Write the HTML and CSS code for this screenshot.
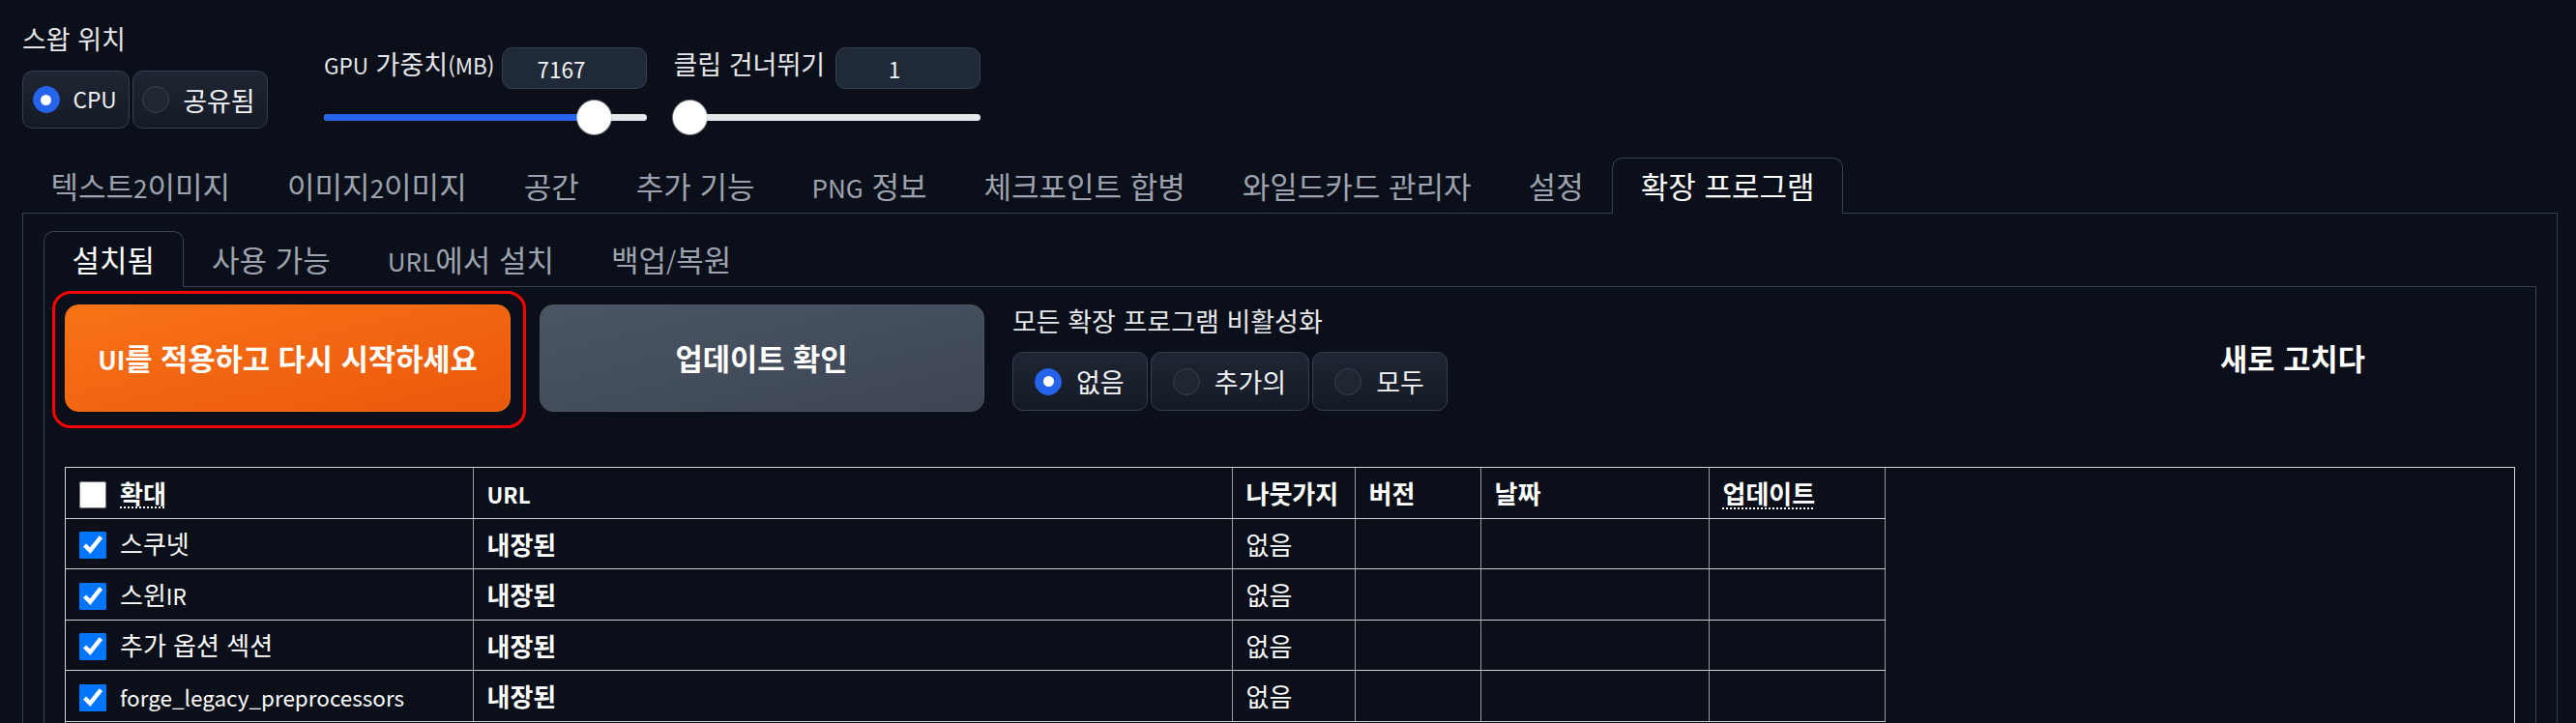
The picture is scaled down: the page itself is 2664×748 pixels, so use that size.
FILE: index.html
```html
<!DOCTYPE html>
<html lang="ko">
<head>
<meta charset="utf-8">
<title>확장 프로그램</title>
<link rel="stylesheet" href="styles.css">
</head>
<body>
<div class="app">
  <div class="top-row">
    <div class="swap">
      <div class="label">스왑 위치</div>
      <div class="radio-group">
        <label class="radio compact checked"><span class="dot"></span><span class="lat">CPU</span></label>
        <label class="radio compact"><span class="dot"></span>공유됨</label>
      </div>
    </div>
    <div class="range-block">
      <div class="range-head">
        <span class="label"><span class="lat">GPU</span> 가중치<span class="lat">(MB)</span></span>
        <input class="num" type="text" value="7167">
      </div>
      <div class="slider"><div class="track"><div class="fill" style="width:83.7%"><span class="thumb"></span></div></div></div>
    </div>
    <div class="range-block">
      <div class="range-head">
        <span class="label">클립 건너뛰기</span>
        <input class="num" type="text" value="1">
      </div>
      <div class="slider"><div class="track"><div class="fill" style="width:5.4%"><span class="thumb"></span></div></div></div>
    </div>
  </div>

  <div class="tabs">
    <nav class="tab-nav">
      <button class="tab">텍스트<span class="lat">2</span>이미지</button>
      <button class="tab">이미지<span class="lat">2</span>이미지</button>
      <button class="tab">공간</button>
      <button class="tab">추가 기능</button>
      <button class="tab"><span class="lat">PNG</span> 정보</button>
      <button class="tab">체크포인트 합병</button>
      <button class="tab">와일드카드 관리자</button>
      <button class="tab">설정</button>
      <button class="tab selected">확장 프로그램</button>
    </nav>
    <div class="panel">
      <nav class="tab-nav">
        <button class="tab selected">설치됨</button>
        <button class="tab">사용 가능</button>
        <button class="tab"><span class="lat">URL</span>에서 설치</button>
        <button class="tab">백업<span class="lat">/</span>복원</button>
      </nav>
      <div class="panel inner">
        <div class="actions">
          <button class="btn btn-primary"><span class="lat">UI</span>를 적용하고 다시 시작하세요</button>
          <button class="btn btn-secondary">업데이트 확인</button>
          <div class="disable">
            <div class="label disable-label">모든 확장 프로그램 비활성화</div>
            <div class="radio-group">
              <label class="radio wide checked"><span class="dot"></span>없음</label>
              <label class="radio wide"><span class="dot"></span>추가의</label>
              <label class="radio wide"><span class="dot"></span>모두</label>
            </div>
          </div>
          <button class="btn btn-tool">새로 고치다</button>
        </div>

        <div class="table-wrap">
          <table class="ext-table">
            <colgroup>
              <col style="width:421px">
              <col style="width:785px">
              <col style="width:127px">
              <col style="width:130px">
              <col style="width:236px">
              <col style="width:182px">
            </colgroup>
            <thead>
              <tr>
                <th><input class="cb" type="checkbox"><abbr>확대</abbr></th>
                <th><span class="lat">URL</span></th>
                <th>나뭇가지</th>
                <th>버전</th>
                <th>날짜</th>
                <th><abbr>업데이트</abbr></th>
              </tr>
            </thead>
            <tbody>
              <tr>
                <td><input class="cb" type="checkbox" checked>스쿠넷</td>
                <td class="strong">내장된</td>
                <td>없음</td><td></td><td></td><td></td>
              </tr>
              <tr>
                <td><input class="cb" type="checkbox" checked>스윈<span class="lat">IR</span></td>
                <td class="strong">내장된</td>
                <td>없음</td><td></td><td></td><td></td>
              </tr>
              <tr>
                <td><input class="cb" type="checkbox" checked>추가 옵션 섹션</td>
                <td class="strong">내장된</td>
                <td>없음</td><td></td><td></td><td></td>
              </tr>
              <tr>
                <td><input class="cb" type="checkbox" checked><span class="lat">forge_legacy_preprocessors</span></td>
                <td class="strong">내장된</td>
                <td>없음</td><td></td><td></td><td></td>
              </tr>
            </tbody>
          </table>
        </div>
      </div>
    </div>
  </div>
</div>
</body>
</html>
```

FILE: styles.css
```css
html, body {
  margin: 0;
  background: #0b0f19;
  overflow: hidden;
}

body {
  font-family: "Noto Sans CJK KR", "Noto Sans", sans-serif;
  color: #f3f4f6;
}

/* Latin runs are set a little smaller than the Hangul around them */
.lat {
  font-size: 0.85em;
  line-height: 1;
}

.app {
  padding: 23px 19px 0 23px;
}

/* ---------- top controls ---------- */
.top-row {
  display: flex;
  align-items: flex-start;
  gap: 27px;
}

.swap {
  width: 285px;
}

.label {
  font-size: 27px;
  line-height: 34px;
  color: #e5e7eb;
  white-space: nowrap;
}

.label .lat {
  font-size: 0.835em;
}

.swap .label {
  margin-bottom: 16px;
}

.radio-group {
  display: flex;
  gap: 3px;
}

.radio {
  display: flex;
  align-items: center;
  box-sizing: border-box;
  height: 60px;
  border: 1px solid #374151;
  border-radius: 10.5px;
  background: linear-gradient(to top, #141a26, #1f2633);
  font-size: 27px;
  color: #f3f4f6;
  white-space: nowrap;
}

.radio .lat {
  font-size: 0.84em;
}

.radio.compact {
  padding: 0 12px 0 9.5px;
}

.radio.wide {
  height: 61px;
  padding: 0 23px 0 22px;
}

.dot {
  flex: none;
  display: flex;
  align-items: center;
  justify-content: center;
  box-sizing: border-box;
  width: 28px;
  height: 28px;
  margin-right: 14px;
  border-radius: 50%;
  border: 1px solid #374151;
  background: #1f2733;
}

.radio.wide .dot {
  margin-right: 15px;
}

.radio.checked .dot {
  background: #2563eb;
  border-color: #2563eb;
}

.radio.checked .dot::after {
  content: "";
  width: 11px;
  height: 11px;
  border-radius: 50%;
  background: #fff;
}

.range-block {
  margin-top: 26px;
}

.range-head {
  display: flex;
  align-items: flex-start;
  gap: 8px;
}

.range-block + .range-block .range-head {
  gap: 11px;
}

.num {
  box-sizing: border-box;
  width: 150px;
  height: 43px;
  margin: 0;
  padding: 0 28px 0 0;
  border: 1px solid #374151;
  border-radius: 10.5px;
  background: #1f2937;
  color: #f3f4f6;
  font: 22.5px "Noto Sans CJK KR", sans-serif;
  text-align: center;
  outline: none;
}

.slider {
  display: flex;
  align-items: center;
  height: 36px;
  margin-top: 11px;
}

.track {
  flex: 1;
  height: 7px;
  border-radius: 4px;
  background: #e5e7eb;
}

.fill {
  position: relative;
  height: 100%;
  border-radius: 4px;
  background: #2563eb;
}

.thumb {
  position: absolute;
  right: -17.5px;
  top: 50%;
  width: 35px;
  height: 35px;
  margin-top: -17.5px;
  border-radius: 50%;
  background: #fff;
  box-shadow: 0 0 0 1px rgba(200, 200, 200, 0.6);
}

/* ---------- tabs ---------- */
.tabs {
  margin-top: 24px;
}

.tab-nav {
  display: flex;
  align-items: flex-start;
  height: 57px;
}

.tab {
  box-sizing: border-box;
  height: 57px;
  margin: 0;
  padding: 7px 28.5px;
  border: 1px solid transparent;
  border-bottom: none;
  border-radius: 10.5px 10.5px 0 0;
  background: none;
  color: #9ca3af;
  font: 31px/42px "Noto Sans CJK KR", sans-serif;
  white-space: nowrap;
  cursor: pointer;
}

.tab .lat {
  font-size: 0.84em;
}

.tab.selected {
  position: relative;
  z-index: 1;
  height: 58px;
  padding-bottom: 8px;
  border-color: #374151;
  background: #0b0f19;
  color: #ffffff;
}

.panel {
  border: 1px solid #374151;
  border-bottom: none;
  padding: 18px 21px 0;
  min-height: 600px;
}

/* ---------- actions ---------- */
.actions {
  display: flex;
  align-items: flex-start;
  gap: 29.5px;
}

.btn {
  flex: none;
  box-sizing: border-box;
  width: 460px;
  height: 111px;
  margin: 0;
  border-radius: 14px;
  color: #ffffff;
  font: 700 30.7px/1.5 "Noto Sans CJK KR", sans-serif;
  white-space: nowrap;
  cursor: pointer;
}

.btn .lat {
  font-size: 0.85em;
}

.btn-primary {
  position: relative;
  width: 461px;
  border: 1px solid #f97316;
  background: linear-gradient(to bottom right, #f97316, #ea580c);
}

.btn-primary::after {
  content: "";
  position: absolute;
  top: -15px;
  right: -17px;
  bottom: -18px;
  left: -14px;
  border: 3px solid #ff0000;
  border-radius: 19px;
  pointer-events: none;
}

.btn-secondary {
  border: 1px solid #4b5563;
  background: linear-gradient(to bottom right, #4b5563, #3d4553);
}

.btn-tool {
  border: none;
  background: transparent;
}

.disable {
  flex: 1;
  min-width: 0;
}

.disable-label {
  margin-bottom: 15px;
}

/* ---------- table ---------- */
.table-wrap {
  margin-top: 57px;
  min-height: 300px;
  border: 1px solid #d4d4d4;
  border-bottom: none;
}

.ext-table {
  border-collapse: collapse;
  table-layout: fixed;
  font-size: 26px;
  color: #ffffff;
}

.ext-table .lat {
  font-size: 0.865em;
}

.ext-table th,
.ext-table td {
  box-sizing: border-box;
  height: 52.5px;
  padding: 0 13px 0 14px;
  border-right: 1px solid #9a9a9a;
  border-bottom: 1px solid #cfcfcf;
  text-align: left;
  vertical-align: middle;
  line-height: 35px;
  white-space: nowrap;
}

.ext-table th {
  height: 52px;
  font-weight: 700;
}

.ext-table .strong {
  font-weight: 700;
}

.cb {
  position: relative;
  top: -2px;
  width: 28px;
  height: 28px;
  margin: 0 14px 0 0;
  vertical-align: middle;
  accent-color: #0075ff;
}

abbr {
  text-decoration: underline dotted;
  text-decoration-thickness: 2px;
  text-underline-offset: 4px;
}
```
